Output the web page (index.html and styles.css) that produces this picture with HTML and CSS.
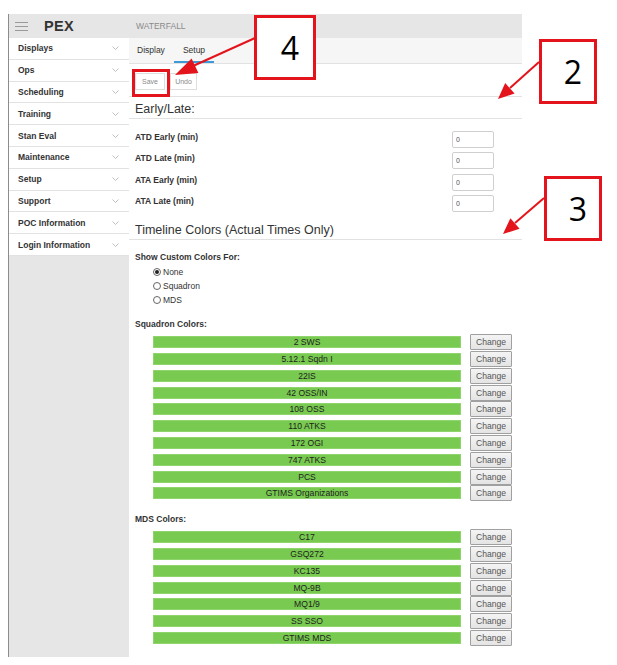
FILE: index.html
```html
<!DOCTYPE html>
<html>
<head>
<meta charset="utf-8">
<link rel="stylesheet" href="styles.css">
</head>
<body>
<div class="page">
  <aside class="sidebar">
    <div class="brand">
      <span class="burger"><i></i><i></i><i></i></span>
      <span class="logo">PEX</span>
    </div>
    <ul class="nav">
      <li>Displays<svg class="chev" viewBox="0 0 7 4"><polyline points="0.5,0.5 3.5,3.5 6.5,0.5"/></svg></li>
      <li>Ops<svg class="chev" viewBox="0 0 7 4"><polyline points="0.5,0.5 3.5,3.5 6.5,0.5"/></svg></li>
      <li>Scheduling<svg class="chev" viewBox="0 0 7 4"><polyline points="0.5,0.5 3.5,3.5 6.5,0.5"/></svg></li>
      <li>Training<svg class="chev" viewBox="0 0 7 4"><polyline points="0.5,0.5 3.5,3.5 6.5,0.5"/></svg></li>
      <li>Stan Eval<svg class="chev" viewBox="0 0 7 4"><polyline points="0.5,0.5 3.5,3.5 6.5,0.5"/></svg></li>
      <li>Maintenance<svg class="chev" viewBox="0 0 7 4"><polyline points="0.5,0.5 3.5,3.5 6.5,0.5"/></svg></li>
      <li>Setup<svg class="chev" viewBox="0 0 7 4"><polyline points="0.5,0.5 3.5,3.5 6.5,0.5"/></svg></li>
      <li>Support<svg class="chev" viewBox="0 0 7 4"><polyline points="0.5,0.5 3.5,3.5 6.5,0.5"/></svg></li>
      <li>POC Information<svg class="chev" viewBox="0 0 7 4"><polyline points="0.5,0.5 3.5,3.5 6.5,0.5"/></svg></li>
      <li>Login Information<svg class="chev" viewBox="0 0 7 4"><polyline points="0.5,0.5 3.5,3.5 6.5,0.5"/></svg></li>
    </ul>
  </aside>
  <main class="main">
    <div class="titlebar">WATERFALL</div>
    <div class="tabs">
      <span class="tab">Display</span>
      <span class="tab active">Setup</span>
    </div>
    <div class="toolbar">
      <button class="tbtn save">Save</button>
      <button class="tbtn undo">Undo</button>
    </div>
    <h2 class="section">Early/Late:</h2>
    <div class="form">
      <div class="frow"><label>ATD Early (min)</label><input class="num" value="0"></div>
      <div class="frow"><label>ATD Late (min)</label><input class="num" value="0"></div>
      <div class="frow"><label>ATA Early (min)</label><input class="num" value="0"></div>
      <div class="frow"><label>ATA Late (min)</label><input class="num" value="0"></div>
    </div>
    <h2 class="section second">Timeline Colors (Actual Times Only)</h2>
    <div class="blabel first">Show Custom Colors For:</div>
    <div class="radios">
      <div class="radio"><span class="dot checked"></span>None</div>
      <div class="radio"><span class="dot"></span>Squadron</div>
      <div class="radio"><span class="dot"></span>MDS</div>
    </div>
    <div class="blabel">Squadron Colors:</div>
    <div class="colors">
      <div class="crow"><span class="bar">2 SWS</span><button class="chg">Change</button></div>
      <div class="crow"><span class="bar">5.12.1 Sqdn I</span><button class="chg">Change</button></div>
      <div class="crow"><span class="bar">22IS</span><button class="chg">Change</button></div>
      <div class="crow"><span class="bar">42 OSS/IN</span><button class="chg">Change</button></div>
      <div class="crow"><span class="bar">108 OSS</span><button class="chg">Change</button></div>
      <div class="crow"><span class="bar">110 ATKS</span><button class="chg">Change</button></div>
      <div class="crow"><span class="bar">172 OGI</span><button class="chg">Change</button></div>
      <div class="crow"><span class="bar">747 ATKS</span><button class="chg">Change</button></div>
      <div class="crow"><span class="bar">PCS</span><button class="chg">Change</button></div>
      <div class="crow"><span class="bar">GTIMS Organizations</span><button class="chg">Change</button></div>
    </div>
    <div class="blabel mds">MDS Colors:</div>
    <div class="colors">
      <div class="crow"><span class="bar">C17</span><button class="chg">Change</button></div>
      <div class="crow"><span class="bar">GSQ272</span><button class="chg">Change</button></div>
      <div class="crow"><span class="bar">KC135</span><button class="chg">Change</button></div>
      <div class="crow"><span class="bar">MQ-9B</span><button class="chg">Change</button></div>
      <div class="crow"><span class="bar">MQ1/9</span><button class="chg">Change</button></div>
      <div class="crow"><span class="bar">SS SSO</span><button class="chg">Change</button></div>
      <div class="crow"><span class="bar">GTIMS MDS</span><button class="chg">Change</button></div>
    </div>
  </main>
</div>

<div class="callout c4">4</div>
<div class="callout c2">2</div>
<div class="callout c3">3</div>
<div class="savebox"></div>
<svg class="arrows" width="617" height="665" viewBox="0 0 617 665">
  <line x1="255" y1="38" x2="193" y2="66"/>
  <polygon points="175,75 198.4,73.1 191.6,58.5"/>
  <line x1="539" y1="62" x2="510" y2="88"/>
  <polygon points="498,99 514.6,93.5 505.2,83.1"/>
  <line x1="544" y1="198" x2="515" y2="223"/>
  <polygon points="503,234 519.6,228.8 510.4,218.2"/>
</svg>
</body>
</html>
```

FILE: styles.css
```css
* { box-sizing: border-box; }
html, body { margin: 0; padding: 0; background: #fff; }
body {
  width: 617px;
  height: 665px;
  position: relative;
  overflow: hidden;
  font-family: "Liberation Sans", Arial, sans-serif;
  color: #333;
}
.page {
  display: flex;
  margin: 14px 0 0 8px;
  height: 643px;
}
.sidebar {
  width: 121px;
  border-left: 1px solid #8c8c8c;
  background: #e6e6e6;
  display: flex;
  flex-direction: column;
}
.brand {
  height: 24px;
  display: flex;
  align-items: center;
  padding-left: 6px;
}
.burger {
  display: flex;
  flex-direction: column;
  gap: 3px;
  width: 13px;
}
.burger i {
  display: block;
  height: 1px;
  background: #9a9a9a;
}
.logo {
  margin-left: 16px;
  font-weight: bold;
  font-size: 14.5px;
  color: #333;
  letter-spacing: 0.3px;
}
.nav {
  list-style: none;
  margin: 0;
  padding: 0;
  background: #fff;
}
.nav li {
  height: 21.8px;
  border-bottom: 1px solid #e2e2e2;
  display: flex;
  align-items: center;
  justify-content: space-between;
  padding: 0 10px 0 9px;
  font-size: 8.5px;
  font-weight: bold;
  color: #333;
}
.chev {
  width: 7px;
  height: 4px;
  fill: none;
  stroke: #b8b8b8;
  stroke-width: 0.9;
}
.main {
  width: 393px;
  display: flex;
  flex-direction: column;
  background: #fff;
}
.titlebar {
  height: 24px;
  background: #e6e6e6;
  display: flex;
  align-items: center;
  padding-left: 7px;
  font-size: 8.5px;
  color: #8a8a8a;
}
.tabs {
  height: 26px;
  background: #f6f6f6;
  border-bottom: 1px solid #e2e2e2;
  display: flex;
}
.tab {
  display: flex;
  align-items: center;
  padding: 0 9px 0 8px;
  font-size: 8.5px;
  color: #333;
  border-bottom: 2px solid transparent;
}
.tab.active {
  padding-left: 9px;
  border-bottom-color: #3d9ad6;
}
.toolbar {
  height: 33px;
  border-bottom: 1px solid #e2e2e2;
  display: flex;
  align-items: flex-start;
  gap: 5px;
  padding: 9px 0 0 6px;
}
.tbtn {
  height: 17px;
  padding: 0;
  background: #fff;
  border: 1px solid #dedede;
  font-family: inherit;
  font-size: 7px;
  color: #8a8a8a;
}
.tbtn.save { width: 30px; }
.tbtn.undo { width: 27px; }
.section {
  margin: 0;
  height: 22px;
  border-bottom: 1px solid #e2e2e2;
  display: flex;
  align-items: center;
  padding: 2px 0 0 6px;
  font-size: 12.5px;
  font-weight: normal;
  color: #333;
}
.section.second { margin-top: 2px; }
.form {
  margin-top: 12px;
  padding: 0 28px 0 6px;
}
.frow {
  height: 21.3px;
  display: flex;
  align-items: flex-start;
  justify-content: space-between;
}
.frow label {
  font-size: 8.5px;
  font-weight: bold;
  color: #333;
  padding-top: 1px;
}
.num {
  width: 42px;
  height: 17px;
  border: 1px solid #cfcfcf;
  border-radius: 2px;
  padding: 0 0 0 3px;
  font-family: inherit;
  font-size: 7px;
  color: #555;
  background: #fff;
}
.blabel {
  margin-top: 11px;
  padding-left: 6px;
  height: 12px;
  line-height: 12px;
  font-size: 8.5px;
  font-weight: bold;
  color: #333;
}
.blabel.first { margin-top: 11px; }
.blabel.mds { margin-top: 11.4px; }
.radios {
  margin-top: 2px;
  padding-left: 24px;
}
.radio {
  height: 14px;
  display: flex;
  align-items: center;
  gap: 2px;
  font-size: 8.5px;
  color: #333;
}
.dot {
  width: 8px;
  height: 8px;
  border: 1px solid #666;
  border-radius: 50%;
  background: #fff;
  display: flex;
  align-items: center;
  justify-content: center;
}
.dot.checked::after {
  content: "";
  width: 4px;
  height: 4px;
  border-radius: 50%;
  background: #222;
}
.colors {
  margin-top: 3.6px;
  padding-left: 24px;
}
.crow {
  height: 16.8px;
  display: flex;
  align-items: center;
  gap: 9px;
}
.bar {
  width: 308px;
  height: 12px;
  background: #78ca50;
  border: 1px solid #8fd46c;
  display: flex;
  align-items: center;
  justify-content: center;
  font-size: 8.6px;
  color: #1e1e1e;
}
.chg {
  width: 42px;
  height: 16px;
  padding: 0;
  background: linear-gradient(#f4f4f4, #e4e4e4);
  border: 1px solid #a0a0a0;
  border-radius: 1px;
  font-family: inherit;
  font-size: 8.6px;
  color: #555;
}
.callout {
  position: absolute;
  background: #fff;
  border: 3px solid #e3141c;
  display: flex;
  align-items: center;
  justify-content: center;
  padding-left: 10px;
  font-family: "Open Sans", "Liberation Sans", sans-serif;
  font-size: 32px;
  color: #000;
}
.c4 { left: 254px; top: 15px; width: 62px; height: 65px; }
.c2 { left: 539px; top: 39px; width: 58px; height: 65px; }
.c3 { left: 544px; top: 176px; width: 58px; height: 65px; }
.savebox {
  position: absolute;
  left: 132px;
  top: 69px;
  width: 38px;
  height: 28px;
  border: 3px solid #e3141c;
}
.arrows {
  position: absolute;
  left: 0;
  top: 0;
  pointer-events: none;
}
.arrows line { stroke: #e3141c; stroke-width: 2; }
.arrows polygon { fill: #e3141c; }
```
